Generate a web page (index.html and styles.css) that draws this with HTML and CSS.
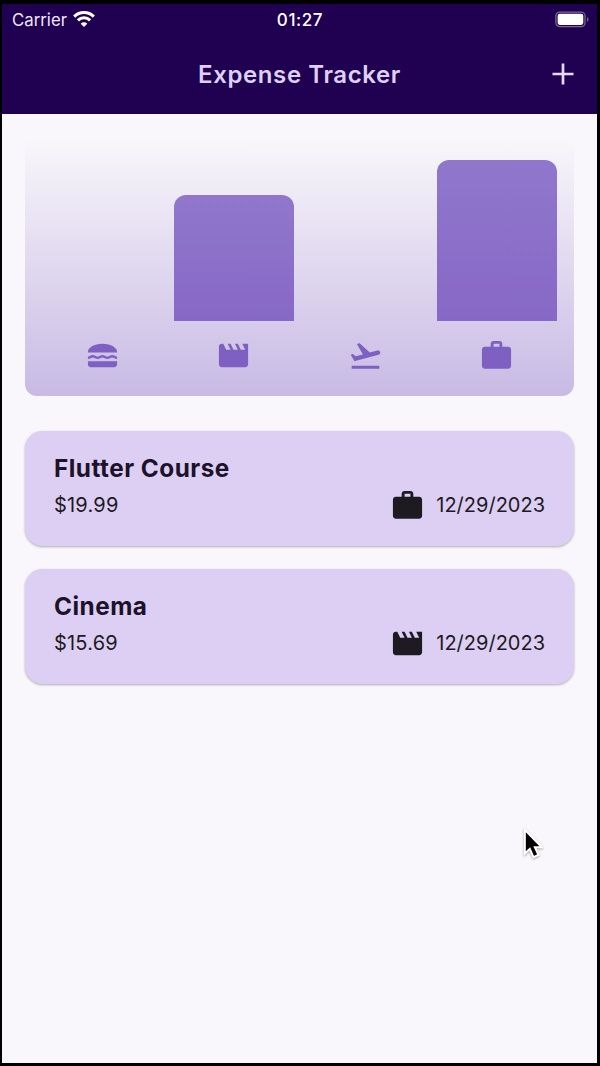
FILE: index.html
```html
<!DOCTYPE html>
<html lang="en">
<head>
<meta charset="utf-8">
<title>Expense Tracker</title>
<link rel="stylesheet" href="styles.css">
</head>
<body>
<svg class="defs" width="0" height="0">
  <symbol id="work" viewBox="0 0 24 24"><path d="M20 6h-4V4c0-1.11-.89-2-2-2h-4c-1.11 0-2 .89-2 2v2H4c-1.11 0-1.99.89-1.99 2L2 19c0 1.11.89 2 2 2h16c1.11 0 2-.89 2-2V8c0-1.11-.89-2-2-2zm-6 0h-4V4h4v2z"/></symbol>
  <symbol id="movie" viewBox="0 0 24 24"><path d="M18 4l2 4h-3l-2-4h-2l2 4h-3l-2-4H8l2 4H7L5 4H4c-1.1 0-1.99.9-1.99 2L2 18c0 1.1.9 2 2 2h16c1.1 0 2-.9 2-2V4h-4z"/></symbol>
  <symbol id="flight" viewBox="0 0 24 24"><path d="M2.5 19h19v2h-19zm19.57-9.36c-.21-.8-1.04-1.28-1.84-1.06L14.92 10l-6.9-6.43-1.93.51 4.14 7.17-4.97 1.33-1.97-1.54-1.45.39 1.82 3.16.77 1.33 1.6-.43 5.31-1.42 4.35-1.16L21 11.49c.81-.23 1.28-1.05 1.07-1.85z"/></symbol>
  <symbol id="food" viewBox="0 0 24 24"><path d="M22 10c.32-3.28-4.28-6-9.99-6S1.7 6.720 2.020 10H22zM2 16h20v2c0 1.100-.9 2-2 2H4c-1.100 0-2-.9-2-2z"/><path d="M2 13.500c1.700 0 1.700-1 3.350-1s1.700 1 3.330 1 1.700-1 3.330-1 1.700 1 3.330 1 1.700-1 3.330-1 1.700 1 3.330 1" fill="none" stroke="currentColor" stroke-width="1.700"/></symbol>
</svg>
<div class="screen">
  <header class="top">
    <div class="status">
      <div class="carrier"><span>Carrier</span>
        <svg class="wifi" viewBox="0 0 22 16"><g fill="none" stroke="#fff" stroke-width="3.100"><path d="M1.200 5.600a13.900 13.900 0 0 1 19.600 0"/><path d="M4.900 9.300a8.700 8.700 0 0 1 12.200 0"/></g><path fill="#fff" d="M11 16L7.700 12.700a4.700 4.700 0 0 1 6.600 0z"/></svg>
      </div>
      <div class="time">01:27</div>
      <div class="power"><svg class="battery" viewBox="0 0 36 17"><rect x=".9" y=".9" width="30" height="15" rx="4" fill="none" stroke="#796a98" stroke-width="1.300"/><rect x="2.700" y="2.700" width="26.400" height="11.400" rx="2.200" fill="#fff"/><path d="M33 6c2 1 2 4 0 5z" fill="#796a98"/></svg></div>
    </div>
    <div class="bar-title">
      <h1>Expense Tracker</h1>
      <svg class="plus" viewBox="0 0 22 22"><path d="M11 .5v21M.5 11h21" stroke="#e6d9fa" stroke-width="2.700"/></svg>
    </div>
  </header>
  <main>
    <section class="chart">
      <div class="bars">
        <div class="col"></div>
        <div class="col"><div class="bar" style="height:78.500%"></div></div>
        <div class="col"></div>
        <div class="col"><div class="bar" style="height:100%"></div></div>
      </div>
      <div class="labels">
        <svg class="icon"><use href="#food"/></svg>
        <svg class="icon"><use href="#movie"/></svg>
        <svg class="icon"><use href="#flight"/></svg>
        <svg class="icon"><use href="#work"/></svg>
      </div>
    </section>
    <section class="list">
      <article class="card">
        <h2>Flutter Course</h2>
        <div class="row"><span class="amount">$19.99</span><svg class="icon"><use href="#work"/></svg><span class="date">12/29/2023</span></div>
      </article>
      <article class="card">
        <h2>Cinema</h2>
        <div class="row"><span class="amount">$15.69</span><svg class="icon"><use href="#movie"/></svg><span class="date">12/29/2023</span></div>
      </article>
    </section>
  </main>
  <svg class="cursor" viewBox="0 0 22 34"><path d="M2 2v26l5.500-5 4 9 5.500-2.500-4-8.500h7.500z" fill="#000" stroke="#fff" stroke-width="2.200"/></svg>
</div>
</body>
</html>
```
FILE: styles.css
```css
* { box-sizing: border-box; }
body {
  margin: 0;
  height: 1066px;
  padding: 4px 3px 3px 2px;
  background: #000;
  font-family: Inter, Roboto, sans-serif;
  overflow: hidden;
}
.defs { position: absolute; }
.screen { position: relative; height: 1059px; background: #f9f7fb; }
.top { height: 110px; background: #200050; color: #fff; }
.status {
  display: grid;
  grid-template-columns: 1fr auto 1fr;
  align-items: center;
  height: 32px;
  padding: 0 7px 0 10px;
}
.carrier { display: flex; align-items: center; gap: 6px; font-size: 16.800px; color: #eee6fa; }
.wifi { width: 22px; height: 16px; margin-bottom: 2px; }
.time { font-size: 17px; font-weight: 500; letter-spacing: .6px; margin-right: 2px; }
.power { display: flex; justify-content: flex-end; padding-bottom: 1px; }
.battery { width: 35px; height: 17px; }
.bar-title {
  display: grid;
  grid-template-columns: 1fr auto 1fr;
  align-items: center;
  height: 76px;
  padding: 0 23.500px;
}
h1 {
  grid-column: 2;
  margin: 0;
  font-size: 24px;
  font-weight: 600;
  letter-spacing: .6px;
  color: #dfd0f7;
}
.plus { width: 22px; height: 22px; justify-self: end; }
main { padding: 23px 23px 0; }
.chart {
  height: 259px;
  padding: 23px 11.500px 0;
  border-radius: 12px;
  background: linear-gradient(to top, #c8bae4, #f9f7fb);
}
.bars { display: grid; grid-template-columns: repeat(4, 1fr); height: 161px; }
.col { display: flex; align-items: flex-end; padding: 0 5.800px; }
.bar { width: 100%; border-radius: 12px 12px 0 0; background: linear-gradient(#9077cc, #8768c6); }
.labels {
  display: grid;
  grid-template-columns: repeat(4, 1fr);
  justify-items: center;
  padding-top: 17px;
  color: #7e5fc2;
}
.icon { width: 35px; height: 35px; fill: currentColor; }
.list { display: flex; flex-direction: column; gap: 23px; padding-top: 35px; }
.card {
  height: 115px;
  padding: 22px 29px 0;
  border-radius: 17.500px;
  background: #ddcff3;
  box-shadow: 0 1px 2.500px rgba(0, 0, 0, .3);
  color: #1d1a22;
}
h2 { margin: 0; font-size: 24.300px; line-height: 30px; font-weight: 700; letter-spacing: .5px; color: #1c1229; }
.row { display: flex; align-items: center; height: 35px; margin-top: 5px; font-size: 20px; }
.amount, .date { padding-bottom: 2px; }
.amount { flex: 1; letter-spacing: .2px; }
.date { margin-left: 11px; }
.cursor {
  position: absolute;
  left: 521px;
  top: 823px;
  width: 20px;
  height: 33px;
  filter: drop-shadow(0 1px 1px rgba(0, 0, 0, .35));
}
```
